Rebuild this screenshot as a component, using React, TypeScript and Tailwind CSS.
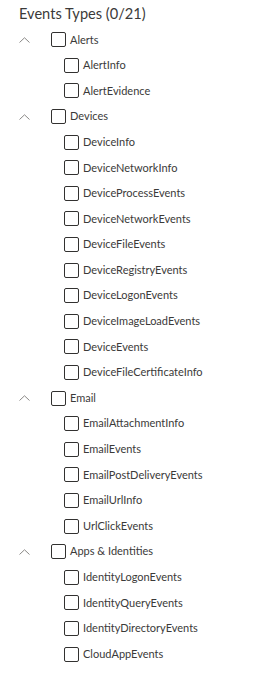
import React from 'react';

const groups = [
  { name: 'Alerts', items: ['AlertInfo', 'AlertEvidence'] },
  {
    name: 'Devices',
    items: [
      'DeviceInfo',
      'DeviceNetworkInfo',
      'DeviceProcessEvents',
      'DeviceNetworkEvents',
      'DeviceFileEvents',
      'DeviceRegistryEvents',
      'DeviceLogonEvents',
      'DeviceImageLoadEvents',
      'DeviceEvents',
      'DeviceFileCertificateInfo',
    ],
  },
  { name: 'Email', items: ['EmailAttachmentInfo', 'EmailEvents', 'EmailPostDeliveryEvents', 'EmailUrlInfo', 'UrlClickEvents'] },
  { name: 'Apps & Identities', items: ['IdentityLogonEvents', 'IdentityQueryEvents', 'IdentityDirectoryEvents', 'CloudAppEvents'] },
];

const Box = () => <span className="w-[15px] h-[15px] border border-[#323130] rounded-[2px] bg-white shrink-0" />;

const Chevron = () => (
  <svg width="11" height="6" viewBox="0 0 11 6" className="shrink-0">
    <path d="M0.5 5.5 L5.5 0.8 L10.5 5.5" fill="none" stroke="#8a8886" strokeWidth="1" />
  </svg>
);

export default function App() {
  return (
    <div className="w-[258px] h-[682px] bg-white text-[#3b3a39] text-[11px]" style={{ fontFamily: 'Lato, sans-serif' }}>
      <div className="h-[27px] flex items-center pl-[19px] text-[14.6px]">Events Types (0/21)</div>
      {groups.map((g) => (
        <div key={g.name}>
          <div className="h-[25.6px] flex items-center pl-[19px]">
            <span className="w-[32px] flex"><Chevron /></span>
            <Box />
            <span className="ml-[4px]">{g.name}</span>
          </div>
          {g.items.map((it) => (
            <div key={it} className="h-[25.6px] flex items-center pl-[64px]">
              <Box />
              <span className="ml-[4px]">{it}</span>
            </div>
          ))}
        </div>
      ))}
    </div>
  );
}
